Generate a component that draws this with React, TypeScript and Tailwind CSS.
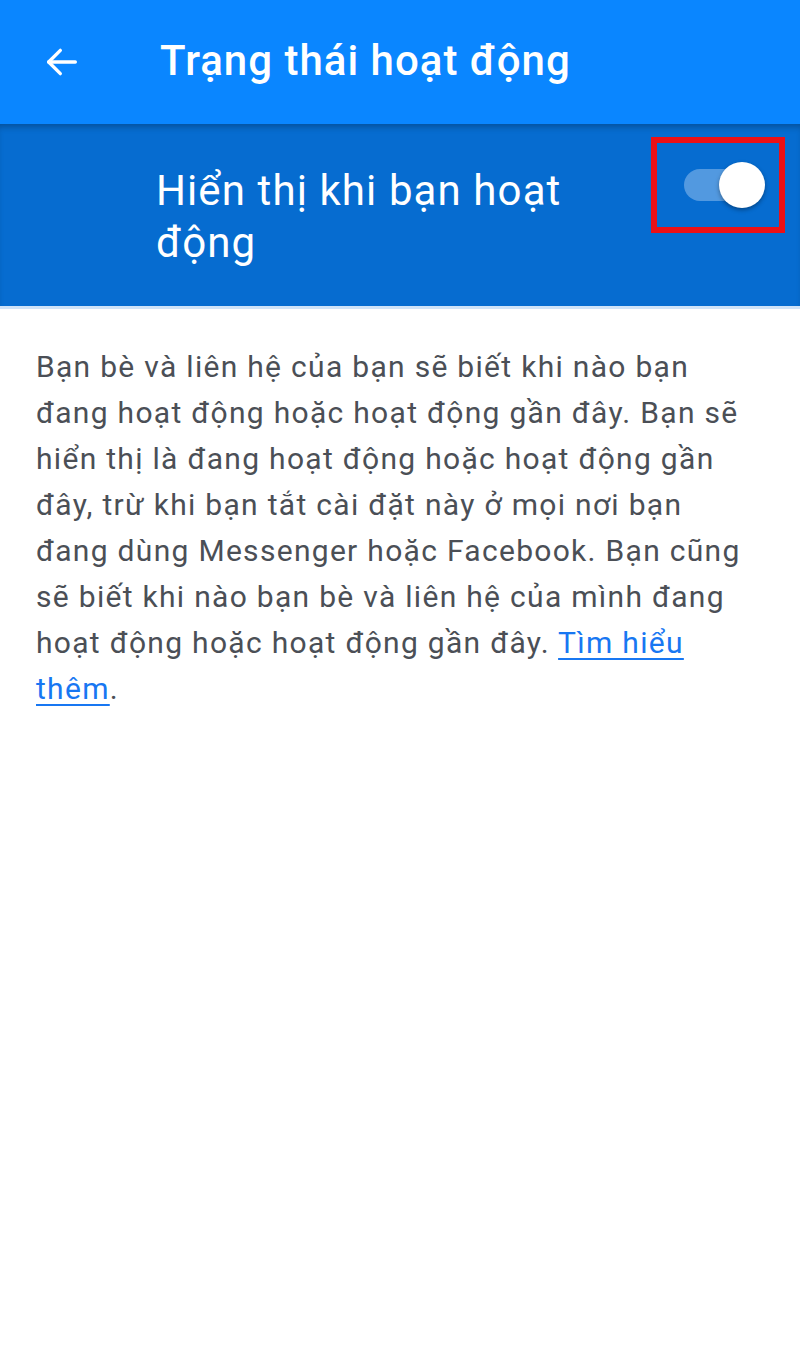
import React from "react";

const lines = [
  "Bạn bè và liên hệ của bạn sẽ biết khi nào bạn",
  "đang hoạt động hoặc hoạt động gần đây. Bạn sẽ",
  "hiển thị là đang hoạt động hoặc hoạt động gần",
  "đây, trừ khi bạn tắt cài đặt này ở mọi nơi bạn",
  "đang dùng Messenger hoặc Facebook. Bạn cũng",
  "sẽ biết khi nào bạn bè và liên hệ của mình đang",
];

export default function App() {
  return (
    <div className="w-[800px] h-[1368px] bg-white" style={{ fontFamily: "Roboto, 'Noto Sans', sans-serif" }}>
      <div className="h-[124px] bg-[#0a86ff] flex items-center">
        <div className="w-[160px] flex items-center pl-[42px]">
          <svg width="40" height="40" viewBox="0 0 24 24" fill="none" stroke="white" strokeWidth="2" strokeLinecap="round" strokeLinejoin="round">
            <path d="M20 12H4" />
            <path d="M11 5l-7 7 7 7" />
          </svg>
        </div>
        <div className="text-white text-[42px] font-medium tracking-[1px] leading-none pb-[2px]">Trạng thái hoạt động</div>
      </div>
      <div className="h-[185px] bg-[#066cd0] flex items-start border-b-[3px] border-[#cfe3f8] shadow-[inset_0_6px_6px_-3px_rgba(0,0,0,0.25)]">
        <div className="pl-[156px] pt-[41px] text-white text-[42px] leading-[52px] tracking-[1.1px]">
          <div>Hiển thị khi bạn hoạt</div>
          <div>động</div>
        </div>
        <div className="ml-auto mt-[13px] mr-[15px] w-[134px] h-[96px] border-[6px] border-[#ec1016] flex items-center justify-center">
          <div className="relative w-[66px] h-[32px] rounded-full bg-[#5299e0] mr-[2px]">
            <div className="absolute right-[-15px] top-[-7px] w-[46px] h-[46px] rounded-full bg-white shadow-[0_2px_4px_rgba(0,0,0,0.35)]"></div>
          </div>
        </div>
      </div>
      <div className="pl-[36px] pt-[35px] text-[#4b4f56] text-[30px] leading-[46px] tracking-[1.3px] whitespace-nowrap">
        {lines.map((l) => (
          <div key={l}>{l}</div>
        ))}
        <div>
          hoạt động hoặc hoạt động gần đây.{" "}
          <span className="text-[#1877f2] underline decoration-[2px] underline-offset-[5px]">Tìm hiểu</span>
        </div>
        <div>
          <span className="text-[#1877f2] underline decoration-[2px] underline-offset-[5px]">thêm</span>.
        </div>
      </div>
    </div>
  );
}
